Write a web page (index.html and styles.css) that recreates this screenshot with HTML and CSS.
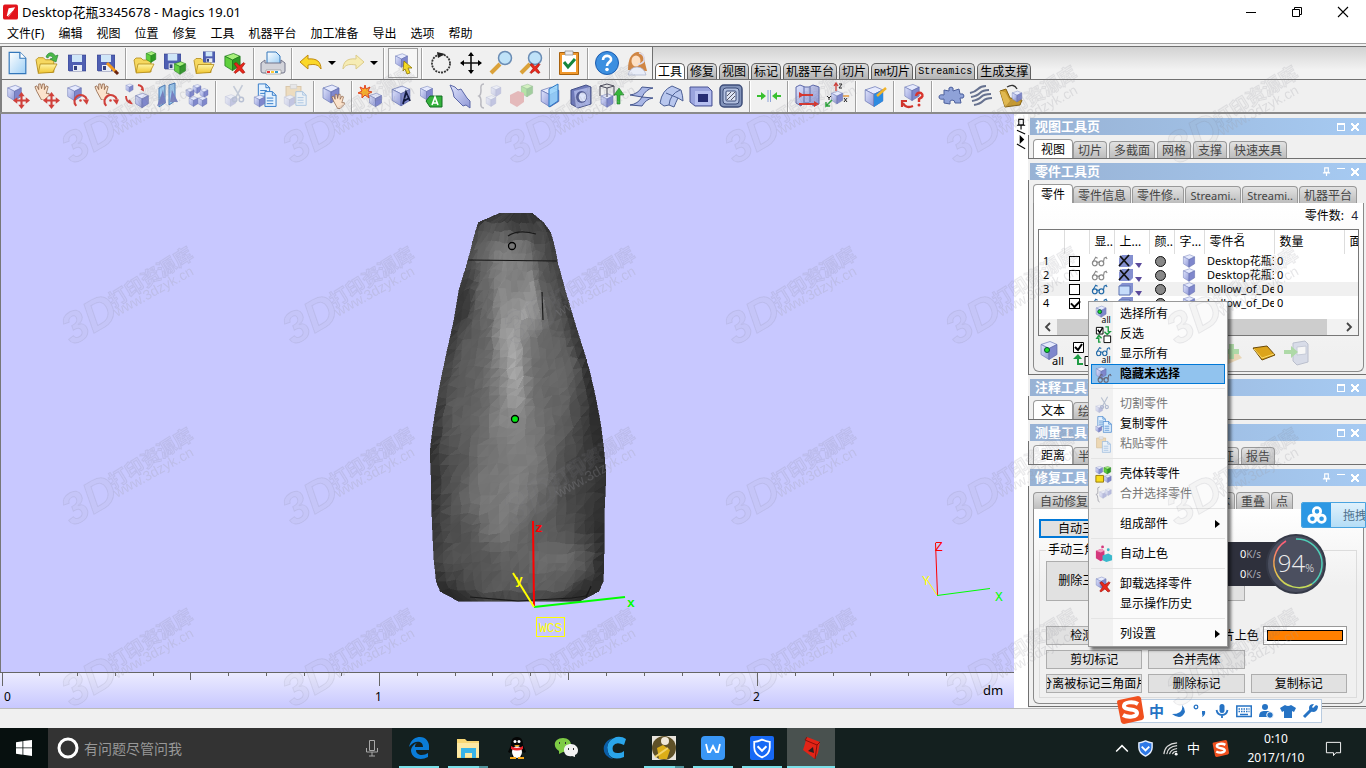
FILE: index.html
```html
<!DOCTYPE html>
<html lang="zh-CN">
<head>
<meta charset="utf-8">
<title>Desktop花瓶3345678 - Magics 19.01</title>
<link rel="stylesheet" href="styles.css">
</head>
<body>
<svg class="defs" aria-hidden="true">
  <defs>
    <linearGradient id="gFace" x1="0" y1="0" x2="1" y2="1"><stop offset="0" stop-color="#dfe4fc"/><stop offset="1" stop-color="#8f97d6"/></linearGradient>
    <linearGradient id="gFolder" x1="0" y1="0" x2="0" y2="1"><stop offset="0" stop-color="#fff6a8"/><stop offset="1" stop-color="#f0c42c"/></linearGradient>
    <linearGradient id="gPage" x1="0" y1="0" x2="1" y2="1"><stop offset="0" stop-color="#fff"/><stop offset="1" stop-color="#9fd0f6"/></linearGradient>
    <linearGradient id="gRing" x1="0" y1="0" x2="0" y2="1"><stop offset="0" stop-color="#ff5a7a"/><stop offset=".6" stop-color="#f2b84a"/><stop offset="1" stop-color="#c4dc5a"/></linearGradient>
  </defs>
  <symbol id="cube" viewBox="0 0 20 20"><path d="M2 4 11 1l7 3-8 4z" fill="#e6eafd" stroke="#6f7cb8" stroke-width=".7"/><path d="M2 4l8 4v11l-8-5z" fill="url(#gFace)" stroke="#6f7cb8" stroke-width=".7"/><path d="M10 8l8-4v10l-8 5z" fill="#7f87cc" stroke="#5d68a8" stroke-width=".7"/></symbol>
  <symbol id="gcube" viewBox="0 0 20 20"><path d="M2 4 11 1l7 3-8 4z" fill="#a8f07c" stroke="#1f7a1c" stroke-width=".8"/><path d="M2 4l8 4v11l-8-5z" fill="#5fd03c" stroke="#1f7a1c" stroke-width=".8"/><path d="M10 8l8-4v10l-8 5z" fill="#2d9a24" stroke="#1f7a1c" stroke-width=".8"/></symbol>
  <symbol id="folder" viewBox="0 0 22 18"><path d="M1 4l2-2h5l2 2h8v12H3z" fill="#f6d860" stroke="#b18a18" stroke-width=".8"/><path d="M5 8h16l-4 8-14 1z" fill="url(#gFolder)" stroke="#b18a18" stroke-width=".8"/></symbol>
  <symbol id="floppy" viewBox="0 0 18 18"><path d="M0 1h18v16H1l-1-1z" fill="#4f5fb2" stroke="#2f3c86" stroke-width=".6"/><path d="M4 1h10v7H4z" fill="#cfe6f8"/><path d="M5 11h9v6H5z" fill="#e9edf5"/><path d="M6 12h3v4H6z" fill="#33407e"/></symbol>
  <symbol id="page" viewBox="0 0 16 20"><path d="M1 1h9l5 5v13H1z" fill="url(#gPage)" stroke="#3377bb"/><path d="M10 1v5h5" fill="#fff" stroke="#3377bb"/></symbol>
  <symbol id="lines" viewBox="0 0 14 18"><path d="M1 1h8l4 4v12H1z" fill="#e5f2fe" stroke="#2f78c8"/><path d="M9 1v4h4M3 8h7M3 11h7M3 14h7" fill="none" stroke="#2f78c8"/></symbol>
  <symbol id="redx" viewBox="0 0 12 12"><path d="M1 2l2-1 3 3 4-3 1 1-3 4 3 4-2 1-3-3-4 3-1-1 3-4z" fill="#e8281c" stroke="#a01008" stroke-width=".6"/></symbol>
  <symbol id="move" viewBox="0 0 16 16"><path d="M8 0l3 4H9v3h3V5l4 3-4 3V9H9v3h2l-3 4-3-4h2V9H4v2L0 8l4-3v2h3V4H5z" fill="#d0403a"/></symbol>
  <symbol id="rot" viewBox="0 0 16 16"><path d="M4 14A6 6 0 1 1 14 8" fill="none" stroke="#d0403a" stroke-width="2"/><path d="M10 8h6l-2 5z" fill="#d0403a"/><circle cx="8" cy="9" r="1.2" fill="#d0403a"/></symbol>
  <symbol id="hand" viewBox="0 0 18 18"><path d="M3 9L1 4l2-1 2 4L5 1l2 0 1 5 1-5 2 0 0 6 2-4 2 1-2 7 3 0v2l-5 5H8z" fill="#fbe3cc" stroke="#8a5a3c" stroke-width=".8"/></symbol>
  <symbol id="scissors" viewBox="0 0 14 18"><path d="M11 1L5 12M3 2l6 10" stroke="#7e90b0" stroke-width="1.4" fill="none"/><circle cx="4" cy="14" r="2" fill="none" stroke="#6679a8" stroke-width="1.3"/><circle cx="10" cy="14" r="2" fill="none" stroke="#6679a8" stroke-width="1.3"/></symbol>
  <symbol id="clip" viewBox="0 0 16 18"><path d="M1 2h14v15H1z" fill="#eac078" stroke="#b98a42"/><path d="M5 0h6v4H5z" fill="#d8d8de" stroke="#999" stroke-width=".6"/></symbol>
  <symbol id="glasses" viewBox="0 0 18 12"><path d="M2 7L5 2l2 1M13 8l1-5 2-1 1 2M6 8q1-2 3 0" fill="none" stroke="currentColor" stroke-width="1.200"/><ellipse cx="4" cy="8.500" rx="2.500" ry="2.700" fill="none" stroke="currentColor" stroke-width="1.300"/><ellipse cx="11" cy="8.500" rx="2.500" ry="2.700" fill="none" stroke="currentColor" stroke-width="1.300"/></symbol>
  <symbol id="s-logo" viewBox="0 0 28 28"><path d="M1 6q0-2 2-2L22 0q2 0 3 2l3 19q0 2-2 3L8 28q-2 0-3-2z" fill="#f0501e"/><path d="M22 8C17 5 8 6 8 10c0 5 13 2 13 7 0 4-9 5-14 2" fill="none" stroke="#fff" stroke-width="4"/></symbol>
  <symbol id="shield" viewBox="0 0 18 18"><path d="M9 1q4 2 7 2v5q0 6-7 9Q2 14 2 8V3q3 0 7-2z" fill="none" stroke="currentColor" stroke-width="1.600"/><path d="M5 7l4 4 4-4" fill="none" stroke="currentColor" stroke-width="1.800"/></symbol>
  <symbol id="pin" viewBox="0 0 10 10"><path d="M3 1h4v5H3zM1 6.500h8M5 7v3" fill="none" stroke="currentColor" stroke-width="1.300"/></symbol>
</svg>

<header class="titlebar">
  <svg class="app-icon" viewBox="0 0 16 16"><rect width="16" height="16" rx="2" fill="#e2141c"/><path d="M4 12l2-8 7-1-3 5-4 5z" fill="#fff"/><path d="M5 13l6-6" stroke="#e2141c"/></svg>
  <span class="title">Desktop花瓶3345678 - Magics 19.01</span>
  <div class="win-btns">
    <button aria-label="最小化"><svg viewBox="0 0 12 12"><path d="M1 6.500h10" stroke="#000"/></svg></button>
    <button aria-label="还原"><svg viewBox="0 0 12 12"><path d="M1.500 3.500h7v7h-7zM3.500 3.500v-2h7v7h-2" fill="none" stroke="#000"/></svg></button>
    <button aria-label="关闭"><svg viewBox="0 0 12 12"><path d="M1 1l10 10M11 1L1 11" stroke="#000" stroke-width="1.100"/></svg></button>
  </div>
</header>
<nav class="menubar">
  <button>文件(F)</button><button>编辑</button><button>视图</button><button>位置</button><button>修复</button><button>工具</button><button>机器平台</button><button>加工准备</button><button>导出</button><button>选项</button><button>帮助</button>
</nav>

<div class="toolbars">
  <div class="tool-row first">
    <div class="tools">
      <button class="tb" aria-label="新建"><svg viewBox="0 0 28 28"><use href="#page" x="5" y="2" width="19" height="24"/></svg></button>
      <button class="tb" aria-label="打开"><svg viewBox="0 0 28 28"><use href="#folder" x="2" y="6" width="23" height="20"/><path d="M13 8c2-6 8-5 9-1l3-1-2 7-6-3 3-1c-1-2-4-3-5 0z" fill="#4ab848" stroke="#1f7a30" stroke-width=".6"/></svg></button>
      <button class="tb" aria-label="保存"><svg viewBox="0 0 28 28"><use href="#floppy" x="5" y="5" width="18" height="18"/></svg></button>
      <button class="tb" aria-label="另存为"><svg viewBox="0 0 28 28"><use href="#floppy" x="4" y="5" width="18" height="18"/><path d="M14 14l9 9" stroke="#f29a1c" stroke-width="3"/><path d="M22 22l3 3" stroke="#6a2410" stroke-width="3"/></svg></button>
      <i class="sep"></i>
      <button class="tb" aria-label="导入零件"><svg viewBox="0 0 28 28"><use href="#folder" x="2" y="6" width="22" height="20"/><use href="#gcube" x="14" y="2" width="12" height="12"/></svg></button>
      <button class="tb" aria-label="保存零件"><svg viewBox="0 0 28 28"><use href="#floppy" x="3" y="4" width="17" height="17"/><use href="#gcube" x="12" y="12" width="14" height="14"/></svg></button>
      <button class="tb" aria-label="零件另存为"><svg viewBox="0 0 28 28"><use href="#folder" x="2" y="7" width="22" height="19"/><use href="#floppy" x="12" y="2" width="12" height="12"/></svg></button>
      <button class="tb" aria-label="卸载零件"><svg viewBox="0 0 28 28"><use href="#gcube" x="2" y="3" width="19" height="20"/><use href="#redx" x="12" y="12" width="13" height="14"/></svg></button>
      <i class="sep"></i>
      <button class="tb" aria-label="打印"><svg viewBox="0 0 28 28"><path d="M8 14V3h9l4 4v7" fill="url(#gPage)" stroke="#3377bb"/><path d="M2 14l4-3v3h16v-3l4 3v8q0 2-2 2H4q-2 0-2-2z" fill="#d2d3da" stroke="#73758a"/><path d="M7 21h15v4H7z" fill="#fff" stroke="#888" stroke-width=".6"/><path d="M8 22h3v2H8z" fill="#e33"/><path d="M12 22h3v2h-3z" fill="#fc3"/><path d="M16 22h3v2h-3z" fill="#39c"/></svg></button>
      <i class="sep"></i>
      <button class="tb" aria-label="撤销"><svg viewBox="0 0 28 28"><path d="M3 13l8-7v4c9-1 13 3 13 10-3-5-7-5-13-4v4z" fill="#fbd828" stroke="#c08a10"/></svg></button>
      <button class="drop" aria-label="撤销列表"></button>
      <button class="tb" aria-label="重做"><svg viewBox="0 0 28 28"><path d="M25 13l-8-7v4C8 9 4 13 4 20c3-5 7-5 13-4v4z" fill="#f6ecb4" stroke="#dccb8a"/></svg></button>
      <button class="drop" aria-label="重做列表"></button>
      <i class="sep"></i>
      <button class="tb pressed" aria-label="选择零件"><svg viewBox="0 0 28 28"><use href="#cube" x="5" y="3" width="15" height="17"/><path d="M15 12l8 7-4 0 2 5-3 1-2-5-2 2z" fill="#ffe21c" stroke="#8a7400" stroke-width=".8"/></svg></button>
      <i class="sep"></i>
      <button class="tb" aria-label="旋转"><svg viewBox="0 0 28 28"><circle cx="14" cy="14.500" r="9" fill="none" stroke="#333" stroke-width="1.800" stroke-dasharray="2 1"/><path d="M10 3l8 2-7 4z" fill="#222"/></svg></button>
      <button class="tb" aria-label="平移"><svg viewBox="0 0 28 28"><path d="M14 4v20M4 14h20" stroke="#111" stroke-width="1.600"/><path d="M14 3l3 4h-6zM14 25l3-4h-6zM3 14l4-3v6zM25 14l-4-3v6z"/></svg></button>
      <button class="tb" aria-label="缩放"><svg viewBox="0 0 28 28"><path d="M4 24l9-9" stroke="#dba23a" stroke-width="4"/><circle cx="18" cy="9" r="6.500" fill="#bfe2f8" stroke="#6a8cb4" stroke-width="1.500"/></svg></button>
      <button class="tb" aria-label="取消缩放"><svg viewBox="0 0 28 28"><path d="M4 24l9-9" stroke="#dba23a" stroke-width="4"/><circle cx="18" cy="9" r="6.500" fill="#bfe2f8" stroke="#6a8cb4" stroke-width="1.500"/><use href="#redx" x="12" y="13" width="12" height="13"/></svg></button>
      <i class="sep"></i>
      <button class="tb" aria-label="检查"><svg viewBox="0 0 28 28"><path d="M4.500 3.500h19v22h-19z" fill="#f0982c" stroke="#a8620e"/><path d="M7 6h14v17H7z" fill="#fff"/><path d="M10 2h8v4h-8z" fill="#e9e9ee" stroke="#888" stroke-width=".7"/><path d="M9 13l4 5 7-8" fill="none" stroke="#16863c" stroke-width="3"/></svg></button>
      <i class="sep"></i>
      <button class="tb" aria-label="帮助"><svg viewBox="0 0 28 28"><circle cx="14" cy="14" r="11.500" fill="#3c8fe0" stroke="#1c5cae"/><path d="M10 11c0-6 9-5 8 0-1 3-4 2-4 6" fill="none" stroke="#fff" stroke-width="2.600"/><circle cx="14" cy="20.500" r="1.800" fill="#fff"/></svg></button>
      <button class="tb" aria-label="在线支持"><svg viewBox="0 0 28 28"><path d="M5 21q0-16 9-18 8-1 8 11l2 8z" fill="#d08644"/><ellipse cx="13" cy="12" rx="4.500" ry="5.500" fill="#fde0c4"/><path d="M5 26q2-8 9-8t9 8z" fill="#e9edf8" stroke="#aab2cc" stroke-width=".7"/><path d="M16 4q6 1 5 8-2 3-6 3" fill="none" stroke="#dde" stroke-width="1.500"/></svg></button>
    </div>
    <div class="page-tabs">
      <button class="on">工具</button><button>修复</button><button>视图</button><button>标记</button><button>机器平台</button><button>切片</button><button><span class="mono">RM</span>切片</button><button class="mono">Streamics</button><button>生成支撑</button>
    </div>
  </div>
  <div class="tool-row">
    <div class="tools">
      <button class="tb" aria-label="移动零件"><svg viewBox="0 0 28 28"><use href="#cube" x="3" y="2" width="17" height="18"/><use href="#move" x="10" y="10" width="17" height="17"/></svg></button>
      <button class="tb" aria-label="手动移动"><svg viewBox="0 0 28 28"><use href="#hand" x="1" y="1" width="17" height="17"/><use href="#move" x="10" y="10" width="17" height="17"/></svg></button>
      <button class="tb" aria-label="旋转零件"><svg viewBox="0 0 28 28"><use href="#cube" x="3" y="2" width="17" height="18"/><use href="#rot" x="9" y="9" width="17" height="17"/></svg></button>
      <button class="tb" aria-label="手动旋转"><svg viewBox="0 0 28 28"><use href="#hand" x="1" y="1" width="17" height="17"/><use href="#rot" x="9" y="9" width="17" height="17"/></svg></button>
      <button class="tb" aria-label="缩放零件"><svg viewBox="0 0 28 28"><use href="#cube" x="2" y="1" width="9" height="10"/><use href="#cube" x="11" y="10" width="16" height="17"/><path d="M15 3q5 1 5 5l-2-1M3 14q0 6 5 7l-2-3" fill="none" stroke="#d0403a" stroke-width="1.800"/></svg></button>
      <button class="tb" aria-label="镜像"><svg viewBox="0 0 28 28"><path d="M6 6l6-3v18l-6 4zM16 3l6-2v18l-6 4z" fill="#9bc8ee" stroke="#4478b8"/><path d="M4 24l6-16 3 13zM17 20l2-12 6 12z" fill="#7680c0"/></svg></button>
      <button class="tb" aria-label="自动摆放"><svg viewBox="0 0 28 28"><use href="#cube" x="9" y="2" width="10" height="10"/><use href="#cube" x="2" y="6" width="10" height="10"/><use href="#cube" x="16" y="6" width="10" height="10"/><use href="#cube" x="5" y="14" width="11" height="11"/><use href="#cube" x="14" y="14" width="11" height="11"/></svg></button>
      <i class="sep"></i>
      <button class="tb dim" aria-label="切割零件"><svg viewBox="0 0 28 28"><use href="#cube" x="3" y="12" width="13" height="13"/><use href="#scissors" x="9" y="2" width="16" height="20"/></svg></button>
      <button class="tb" aria-label="复制零件"><svg viewBox="0 0 28 28"><use href="#lines" x="6" y="1" width="14" height="17"/><use href="#lines" x="13" y="8" width="13" height="18"/><use href="#cube" x="2" y="12" width="13" height="14"/></svg></button>
      <button class="tb dim" aria-label="粘贴零件"><svg viewBox="0 0 28 28"><use href="#clip" x="4" y="2" width="17" height="20"/><use href="#lines" x="14" y="8" width="12" height="17"/><use href="#cube" x="2" y="12" width="13" height="14"/></svg></button>
      <i class="sep"></i>
      <button class="tb" aria-label="拾取"><svg viewBox="0 0 28 28"><use href="#cube" x="2" y="2" width="20" height="20"/><use href="#hand" x="12" y="11" width="15" height="16"/></svg></button>
      <i class="sep"></i>
      <button class="tb" aria-label="创建"><svg viewBox="0 0 28 28"><use href="#cube" x="11" y="10" width="15" height="16"/><path d="M8 3l1 4 4-2-2 4 4 1-4 2 1 4-4-3-3 3 0-4-4-1 4-2-2-4 4 2z" fill="#ffb224" stroke="#e3401c"/></svg></button>
      <button class="tb" aria-label="文字"><svg viewBox="0 0 28 28"><use href="#cube" x="3" y="2" width="22" height="24"/><path d="M16 22l3-12 4 9M17 19l5-3" fill="none" stroke="#10183c" stroke-width="1.800"/></svg></button>
      <button class="tb" aria-label="标签"><svg viewBox="0 0 28 28"><use href="#cube" x="2" y="3" width="15" height="16"/><path d="M9 19l4-5h12v11H13z" fill="#35b23c" stroke="#136e22"/><path d="M15 23l3-8 3 8M16 21h4" fill="none" stroke="#fff" stroke-width="1.600"/></svg></button>
      <button class="tb" aria-label="拉伸"><svg viewBox="0 0 28 28"><path d="M3 3l5 2 3 3 3-1 6 9 3 3v7l-4-3-3 1-9-9-1-5z" fill="url(#gFace)" stroke="#5c68a8"/></svg></button>
      <button class="tb dim" aria-label="合并"><svg viewBox="0 0 28 28"><path d="M7 2q-4 0-3 6 0 5-2 6 2 1 2 6-1 6 3 6" fill="none" stroke="#667" stroke-width="1.500"/><use href="#cube" x="13" y="3" width="12" height="12"/><use href="#cube" x="8" y="13" width="12" height="12"/></svg></button>
      <button class="tb dim" aria-label="布尔"><svg viewBox="0 0 28 28"><use href="#gcube" x="13" y="1" width="14" height="15"/><path d="M3 13l8-4 6 2v9l-7 5-7-4z" fill="#d4686c"/></svg></button>
      <button class="tb" aria-label="切割"><svg viewBox="0 0 28 28"><use href="#cube" x="2" y="4" width="22" height="22"/><path d="M12 7l9-5v17l-9 6z" fill="#94d2fa" fill-opacity=".85" stroke="#2a78c4"/></svg></button>
      <button class="tb" aria-label="打孔"><svg viewBox="0 0 28 28"><path d="M4 8l15-5 5 2v17l-13 4-7-4z" fill="#6d78b8" stroke="#445088"/><path d="M7 9l16-4v17l-14 4z" fill="#a6b0e2"/><ellipse cx="14.500" cy="15" rx="5.500" ry="6" fill="#525c96"/><ellipse cx="15.500" cy="15" rx="3.800" ry="4.500" fill="#dfe6fc"/></svg></button>
      <button class="tb" aria-label="拉升"><svg viewBox="0 0 28 28"><use href="#cube" x="2" y="11" width="16" height="15"/><path d="M3 14V4l7-2 7 2v10M10 6v9M3 4l7 2 7-2" fill="none" stroke="#445"/><path d="M20 22v-9h-3l5-7 5 7h-4v9z" fill="#37b63a" stroke="#1c7a28" stroke-width=".6"/></svg></button>
      <button class="tb" aria-label="偏移"><svg viewBox="0 0 28 28"><path d="M3 13q8-1 12-8l11 1q-7 1-11 9zM3 23q8-1 12-8l11 1q-7 1-11 8z" fill="#aab7e6" stroke="#46578f"/></svg></button>
      <button class="tb" aria-label="曲面"><svg viewBox="0 0 28 28"><path d="M3 21q2-13 12-17l9 4q2 6 2 11l-5-3q-2 4-4 9l-5-2-5 1z" fill="#b9c7ee" stroke="#4c5f95"/><path d="M12 23q1-11 11-15M9 11l12 5" fill="none" stroke="#4c5f95"/></svg></button>
      <button class="tb" aria-label="抽壳"><svg viewBox="0 0 28 28"><path d="M3 5h18l4 4v15H8l-5-4z" fill="#9aa4de" stroke="#4b5594"/><path d="M8 9h16v14H8z" fill="#b6bff0"/><path d="M11 12h10v8H11z" fill="#252c74"/></svg></button>
      <button class="tb" aria-label="填充"><svg viewBox="0 0 28 28"><rect x="3" y="3" width="22" height="22" rx="4" fill="#8293ba" stroke="#3c4c78" stroke-width="1.500"/><rect x="6" y="6" width="16" height="16" rx="3" fill="#b2c0e0" stroke="#3c4c78"/><rect x="9" y="9" width="10" height="10" rx="1" fill="#dde4f4" stroke="#3c4c78"/><path d="M10 14l4-4M10 18l8-8M14 18l4-4" stroke="#556"/></svg></button>
      <i class="sep"></i>
      <button class="tb" aria-label="间距"><svg viewBox="0 0 28 28"><path d="M2 13h4v-3l5 4-5 4v-3H2zM26 13h-4v-3l-5 4 5 4v-3h4z" fill="#38c030"/><path d="M13 8v12M15.500 8v12" stroke="#8fa4d8"/></svg></button>
      <i class="sep"></i>
      <button class="tb" aria-label="测量"><svg viewBox="0 0 28 28"><path d="M3 5l4-2 5 2 4 0 4-2 6 2v17l-5 2-5-3-6 0-2 3-5-3z" fill="url(#gFace)" stroke="#5d68a8"/><path d="M11 5v15M17 5v15" stroke="#5d68a8"/><path d="M6 13h14M6 22h16" stroke="#d8342c" stroke-width="2"/><path d="M11 13l-5-3v6zM26 22l-5-3v6z" fill="#d8342c"/></svg></button>
      <button class="tb" aria-label="坐标"><svg viewBox="0 0 28 28"><use href="#cube" x="7" y="8" width="14" height="15"/><path d="M13 9V2M11 4l2-3 2 3" fill="none" stroke="#d8342c" stroke-width="1.300"/><path d="M20 14h6" stroke="#e89a3a" stroke-width="1.500"/><path d="M9 18l-6 6v-4M3 24h4" fill="none" stroke="#29a238" stroke-width="1.500"/><path d="M16 2h3l-3 4h3M21 16l3 4M24 16l-3 4M4 14l2 2 2-2M6 16v2" stroke="#222" fill="none"/></svg></button>
      <i class="sep"></i>
      <button class="tb" aria-label="修复零件"><svg viewBox="0 0 28 28"><use href="#cube" x="2" y="3" width="22" height="23"/><path d="M13 12l9-4v11l-9 6z" fill="#2d8be0"/><path d="M16 14l9-8" stroke="#f2b428" stroke-width="2.500"/></svg></button>
      <i class="sep"></i>
      <button class="tb" aria-label="诊断"><svg viewBox="0 0 28 28"><use href="#cube" x="4" y="1" width="18" height="19"/><path d="M14 24q-7 3-10-3M3 25v-6h5" fill="none" stroke="#d0342c" stroke-width="2.200"/><path d="M17 14q1-4 5-3 4 3-2 6v3" fill="none" stroke="#d8342c" stroke-width="2.400"/><circle cx="20" cy="23" r="1.500" fill="#d8342c"/></svg></button>
      <i class="sep"></i>
      <button class="tb" aria-label="装配"><svg viewBox="0 0 28 28"><path d="M7 8l5 1q-1-4 2-4t2 4l6-2 1 5q4-1 4 2t-4 2l1 5-6 0q0-3-3-3t-2 4l-6-1v-4q-5 1-5-2t5-2z" fill="#8fa2d8" stroke="#4d609c"/></svg></button>
      <button class="tb" aria-label="纹理"><svg viewBox="0 0 28 28"><path d="M3 11q5-1 8-4t8-3M4 15q6-1 9-4t9-3M5 19q6-1 9-4t10-3M7 23q6-1 9-4t9-3" fill="none" stroke="#66718f" stroke-width="2"/></svg></button>
      <button class="tb" aria-label="翻转"><svg viewBox="0 0 28 28"><path d="M3 9l6-2 4 9 12 2-2 5-15 2z" fill="#c89a2c" stroke="#87620e"/><path d="M3 9l5 1 5 9-5 6z" fill="#e0b850"/><use href="#cube" x="14" y="8" width="12" height="13"/><path d="M10 5q7-4 10 2" fill="none" stroke="#333" stroke-width="1.300"/></svg></button>
    </div>
  </div>
</div>

<main class="workspace">
  <section class="view">
    <svg class="scene" viewBox="0 115 1014 556">
      <g id="mesh" shape-rendering="crispEdges"></g>
      <path d="M468 260l89 1" stroke="#161616"/>
      <path d="M508 236q10-7 28-2M542 292l1 28M470 597l48 4 54-3 14-2 5-9M586 598l5-12" fill="none" stroke="#1a1a1a" stroke-width="1.200"/>
      <circle cx="512" cy="246" r="3.500" fill="#777" stroke="#000" stroke-width="1.300"/>
      <circle cx="515" cy="419" r="3.500" fill="#00ea10" stroke="#000" stroke-width="1.300"/>
      <path d="M533 521l1 86" stroke="#f00" stroke-width="2"/>
      <path d="M534 607l91-10" stroke="#0f0" stroke-width="2"/>
      <path d="M534 607l-21-34" stroke="#ff0" stroke-width="2"/>
      <text class="axis bold" x="535" y="532" fill="#f00">z</text>
      <text class="axis bold" x="515" y="584" fill="#ff0">y</text>
      <text class="axis bold" x="627" y="607" fill="#0f0">x</text>
      <rect x="536.500" y="617.500" width="28" height="19" fill="none" stroke="#ff0"/>
      <text class="axis" x="539" y="632" fill="#ff0">WCS</text>
      <path d="M935.500 543l2 52" stroke="#f00"/><path d="M937 595.500l53-7" stroke="#0f0"/><path d="M937 595l-10-15" stroke="#ff0"/>
      <text class="axis" x="935" y="551" fill="#f00">Z</text><text class="axis" x="922" y="585" fill="#ff0">Y</text><text class="axis" x="995" y="601" fill="#0f0">X</text>
    </svg>
    <svg class="ruler" viewBox="0 0 1014 36" preserveAspectRatio="xMinYMin slice">
      <path d="M0 .5h1014M2.500 0v14M379.500 0v14M757.500 0v14" stroke="#666"/>
      <path d="M190.500 0v8M568.500 0v8M946.500 0v4" stroke="#666"/>
      <path d="M39.500 0v4M77.500 0v4M115.500 0v4M153.500 0v4M228.500 0v4M266.500 0v4M304.500 0v4M341.500 0v4M417.500 0v4M455.500 0v4M492.500 0v4M530.500 0v4M606.500 0v4M644.500 0v4M682.500 0v4M719.500 0v4M795.500 0v4M833.500 0v4M870.500 0v4M908.500 0v4" stroke="#666"/>
      <text x="4" y="29">0</text><text x="375" y="29">1</text><text x="753" y="29">2</text><text class="unit" x="983" y="23">dm</text>
    </svg>
  </section>

  <aside class="dock">
    <div class="dock-grip">
      <svg viewBox="0 0 12 36"><path d="M3 2h5v6H3zM1 8.500h9M5.500 9v4M1 14l9 4M1 29l9 5" fill="none" stroke="#000" stroke-width="1.200"/><path d="M4 19l5 5-5 5z"/></svg>
    </div>
    <div class="panels">
      <section class="panel">
        <h2>视图工具页<span class="ctl"><i class="max"></i><i class="x"></i></span></h2>
        <div class="body"><div class="tabs wide"><button class="on">视图</button><button>切片</button><button>多截面</button><button>网格</button><button>支撑</button><button>快速夹具</button></div></div>
      </section>
      <section class="panel">
        <h2>零件工具页<span class="ctl"><svg viewBox="0 0 10 10"><use href="#pin"/></svg><i class="min"></i><i class="x"></i></span></h2>
        <div class="body">
          <div class="tabs"><button class="on">零件</button><button>零件信息</button><button>零件修..</button><button class="sm">Streami..</button><button class="sm">Streami..</button><button>机器平台</button></div>
          <div class="page">
            <p class="count">零件数: <span>4</span></p>
            <div class="grid">
              <table>
                <colgroup><col class="c25"><col class="c25"><col class="c25"><col class="c35"><col class="c25"><col class="c30"><col class="c70"><col class="c70"><col></colgroup>
                <thead><tr><th></th><th></th><th>显..</th><th>上...</th><th>颜..</th><th>字...</th><th class="sort">零件名</th><th>数量</th><th>面</th></tr></thead>
                <tbody>
                  <tr><td>1</td><td><input type="checkbox" aria-label="零件 1"></td><td class="g"><svg viewBox="0 0 18 12"><use href="#glasses"/></svg></td><td><svg class="sh" viewBox="0 0 24 14"><path d="M1 4l3-3h11v9l-3 3H1z" fill="#8490d0"/><path d="M2 2l9 10M11 1L1 12" stroke="#111" stroke-width="1.800"/><path d="M17 9h7l-3 5z" fill="#5a4a9c"/></svg></td><td><i class="dot"></i></td><td><svg class="cb" viewBox="0 0 20 20"><use href="#cube"/></svg></td><td>Desktop花瓶3</td><td>0</td><td></td></tr>
                  <tr><td>2</td><td><input type="checkbox" aria-label="零件 2"></td><td class="g"><svg viewBox="0 0 18 12"><use href="#glasses"/></svg></td><td><svg class="sh" viewBox="0 0 24 14"><path d="M1 4l3-3h11v9l-3 3H1z" fill="#8490d0"/><path d="M2 2l9 10M11 1L1 12" stroke="#111" stroke-width="1.800"/><path d="M17 9h7l-3 5z" fill="#5a4a9c"/></svg></td><td><i class="dot"></i></td><td><svg class="cb" viewBox="0 0 20 20"><use href="#cube"/></svg></td><td>Desktop花瓶3</td><td>0</td><td></td></tr>
                  <tr class="alt"><td>3</td><td><input type="checkbox" aria-label="零件 3"></td><td class="g b"><svg viewBox="0 0 18 12"><use href="#glasses"/></svg></td><td><svg class="sh" viewBox="0 0 24 14"><path d="M1 4l3-3h11v9l-3 3H1z" fill="#8490d0"/><path d="M1 4h11v9H1z" fill="#c6dcfa" stroke="#5a70b0"/><path d="M17 9h7l-3 5z" fill="#5a4a9c"/></svg></td><td><i class="dot"></i></td><td><svg class="cb" viewBox="0 0 20 20"><use href="#cube"/></svg></td><td>hollow_of_Des</td><td>0</td><td></td></tr>
                  <tr><td>4</td><td><input type="checkbox" checked aria-label="零件 4"></td><td class="g b"><svg viewBox="0 0 18 12"><use href="#glasses"/></svg></td><td><svg class="sh" viewBox="0 0 24 14"><path d="M1 4l3-3h11v9l-3 3H1z" fill="#8490d0"/><path d="M1 4h11v9H1z" fill="#c6dcfa" stroke="#5a70b0"/></svg></td><td><i class="dot"></i></td><td><svg class="cb" viewBox="0 0 20 20"><use href="#cube"/></svg></td><td>hollow_of_Des</td><td>0</td><td></td></tr>
                </tbody>
              </table>
              <div class="hscroll"><button aria-label="向左"><svg viewBox="0 0 8 10"><path d="M6 1L2 5l4 4" fill="none" stroke="#444" stroke-width="1.800"/></svg></button><span></span><button aria-label="向右"><svg viewBox="0 0 8 10"><path d="M2 1l4 4-4 4" fill="none" stroke="#444" stroke-width="1.800"/></svg></button></div>
            </div>
            <div class="part-tools">
              <button aria-label="选择所有"><svg viewBox="0 0 26 26"><use href="#cube" width="20" height="21"/><circle cx="8" cy="10" r="2.500" fill="#1de02a" stroke="#053"/><text x="13" y="25">all</text></svg></button>
              <button aria-label="反选"><svg viewBox="0 0 26 26"><path d="M2.500 2.500h10v10h-10zM14 16.500h9v9h-9z" fill="#fff" stroke="#000"/><path d="M4 7l3 3 4-6" fill="none" stroke="#000" stroke-width="2"/><path d="M7 14l4 5H8v4h4v2H6v-6H2z" fill="#1f9c44"/></svg></button>
              <span class="grow"></span>
              <button class="dim" aria-label="添加"><svg viewBox="0 0 26 26"><path d="M1 14l14-5 8 9-14 6z" fill="#e0b060"/><path d="M10 4h5v5h5v5h-5v5h-5v-5H5V9h5z" fill="#4eb83c"/></svg></button>
              <button aria-label="平台"><svg viewBox="0 0 26 26"><path d="M2 8l14-2 8 9-13 5z" fill="#dca41c" stroke="#6c4a08"/><path d="M3 9l8 9 12-4" stroke="#f8da6c" fill="none"/></svg></button>
              <button class="dim" aria-label="发送到机器"><svg viewBox="0 0 26 26"><path d="M10 3l12-2 3 3v18l-11 3-4-4z" fill="#b4bedc" stroke="#6c789a"/><path d="M14 7l9-1v8l-9 1z" fill="#fff" stroke="#8895b5"/><path d="M1 10h7V6l7 6-7 6v-4H1z" fill="#4eb83c"/></svg></button>
            </div>
          </div>
        </div>
      </section>
      <section class="panel">
        <h2>注释工具页<span class="ctl"><i class="max"></i><i class="x"></i></span></h2>
        <div class="body"><div class="tabs"><button class="on">文本</button><button>绘图</button></div></div>
      </section>
      <section class="panel">
        <h2>测量工具页<span class="ctl"><i class="max"></i><i class="x"></i></span></h2>
        <div class="body"><div class="tabs wide"><button class="on">距离</button><button>半径</button><button>角度</button><button>壁厚分析</button><button>特征</button><button>报告</button></div></div>
      </section>
      <section class="panel last">
        <h2>修复工具页<span class="ctl"><svg viewBox="0 0 10 10"><use href="#pin"/></svg><i class="min"></i><i class="x"></i></span></h2>
        <div class="body">
          <div class="tabs"><button>自动修复</button><button>基本</button><button>空洞</button><button>三角</button><button>壳体</button><button>重叠</button><button>点</button></div>
          <div class="page repair">
            <button class="btn focus">自动三角面片</button>
            <fieldset>
              <legend>手动三角面片</legend>
              <div class="btns">
                <button class="btn tall">删除三角面片</button><button class="btn tall">标记三角面片</button><span></span>
                <button class="btn low">检测标记</button><span class="lbl">面片上色</span><button class="color" aria-label="面片上色"><i></i></button>
                <button class="btn">剪切标记</button><button class="btn">合并壳体</button><span></span>
                <button class="btn clip"><span>分离被标记三角面片</span></button><button class="btn">删除标记</button><button class="btn">复制标记</button>
              </div>
            </fieldset>
          </div>
        </div>
      </section>
    </div>
  </aside>

  <div class="net">
    <div class="rates"><span><b>0</b>K/s</span><span><b>0</b>K/s</span></div>
    <div class="gauge"><svg viewBox="0 0 60 60"><circle cx="30" cy="30" r="29" fill="#4b4f5f" stroke="#363a48" stroke-width="2"/><path d="M20 7a25 25 0 1 0 26 43" fill="none" stroke="url(#gRing)" stroke-width="1.500"/><path d="M30 5a25 25 0 0 1 16 45" fill="none" stroke="#4fd0b8" stroke-width="1.500"/></svg><p>94<small>%</small></p></div>
  </div>
  <div class="cloud"><span class="mark"><svg viewBox="0 0 24 24"><g fill="none" stroke="#fff" stroke-width="3"><circle cx="12" cy="8" r="4"/><circle cx="7" cy="16" r="4"/><circle cx="17" cy="16" r="4"/></g></svg></span><span class="txt">拖拽上传</span></div>

  <div class="context" role="menu">
    <button role="menuitem"><svg viewBox="0 0 20 20"><use href="#cube" x="1" y="0" width="13" height="14"/><circle cx="6" cy="7" r="2" fill="#1de02a" stroke="#053"/><text x="8" y="19">all</text></svg>选择所有</button>
    <button role="menuitem"><svg viewBox="0 0 20 20"><path d="M2.500 2.500h7v7h-7zM10.500 11.500h7v7h-7z" fill="#fff" stroke="#000"/><path d="M4 5l2 3 3-5" fill="none" stroke="#000" stroke-width="1.500"/><path d="M12 2h3v5h2l-3 3-3-3M7 18H5v-4H3l2-3 3 3" fill="none" stroke="#1f9c44" stroke-width="1.500"/></svg>反选</button>
    <button role="menuitem"><svg class="blue" viewBox="0 0 20 20"><use href="#glasses" x="1" y="1" width="17" height="11"/><text x="8" y="19">all</text></svg>显示所有</button>
    <button role="menuitem" class="hot"><svg viewBox="0 0 20 20"><use href="#cube" x="1" y="1" width="13" height="14"/><use href="#glasses" x="3" y="8" width="16" height="11" color="#667"/></svg>隐藏未选择</button>
    <hr>
    <button role="menuitem" disabled><svg viewBox="0 0 20 20"><use href="#cube" x="1" y="10" width="9" height="9"/><use href="#scissors" x="5" y="1" width="12" height="15"/></svg>切割零件</button>
    <button role="menuitem"><svg viewBox="0 0 20 20"><use href="#lines" x="3" y="1" width="10" height="12"/><use href="#lines" x="9" y="6" width="10" height="13"/><use href="#cube" x="1" y="10" width="8" height="9"/></svg>复制零件</button>
    <button role="menuitem" disabled><svg viewBox="0 0 20 20"><use href="#clip" x="2" y="1" width="11" height="14"/><use href="#lines" x="8" y="6" width="10" height="13"/></svg>粘贴零件</button>
    <hr>
    <button role="menuitem"><svg viewBox="0 0 20 20"><use href="#cube" x="1" y="1" width="9" height="9"/><use href="#gcube" x="9" y="1" width="10" height="9"/><path d="M2 11h8v7H2z" fill="#f8dc1c" stroke="#987c08"/><use href="#cube" x="10" y="10" width="9" height="9"/></svg>壳体转零件</button>
    <button role="menuitem" disabled><svg viewBox="0 0 20 20"><path d="M6 2q-3 0-2 4t-2 4q2 0 2 4t2 4" fill="none" stroke="#667"/><use href="#cube" x="5" y="5" width="9" height="10"/><use href="#cube" x="11" y="3" width="8" height="9"/></svg>合并选择零件</button>
    <hr>
    <button role="menuitem" class="sub"><svg viewBox="0 0 20 20"></svg>组成部件</button>
    <hr>
    <button role="menuitem"><svg viewBox="0 0 20 20"><path d="M2 6l6-2 3 2v9l-4 2-5-3z" fill="#d4377c"/><path d="M9 11l6-2 4 2v5l-6 2-4-2z" fill="#3bb8cc"/><path d="M2 6l5 2 4-2-3-2z" fill="#f39ac0"/><circle cx="9" cy="2" r="1.500" fill="#d4377c"/><circle cx="15" cy="5" r="1.500" fill="#3bb8cc"/></svg>自动上色</button>
    <hr>
    <button role="menuitem"><svg viewBox="0 0 20 20"><use href="#cube" x="1" y="1" width="13" height="14"/><use href="#redx" x="5" y="6" width="13" height="13"/></svg>卸载选择零件</button>
    <button role="menuitem"><svg viewBox="0 0 20 20"></svg>显示操作历史</button>
    <hr>
    <button role="menuitem" class="sub"><svg viewBox="0 0 20 20"></svg>列设置</button>
  </div>
  <div class="ime">
    <svg class="logo" viewBox="0 0 28 28"><use href="#s-logo"/></svg>
    <span>中</span>
    <svg viewBox="0 0 16 16"><path d="M12 2q2 9-10 9 9 7 13-2 0-4-3-7z" fill="#2673c4"/></svg>
    <svg viewBox="0 0 16 16"><circle cx="4" cy="4" r="1.800" fill="none" stroke="#2673c4" stroke-width="1.300"/><path d="M10 8h3q1 4-3 6 1-2 0-3z" fill="#2673c4"/></svg>
    <svg viewBox="0 0 16 16"><rect x="5.500" y="1" width="5" height="9" rx="2.500" fill="#2673c4"/><path d="M2.500 7q1 5 5.500 5t5.500-5M8 12v3" fill="none" stroke="#2673c4" stroke-width="1.800"/></svg>
    <svg viewBox="0 0 16 16"><path d="M.800 3h14.500v10.500H.800z" fill="#fff" stroke="#2673c4" stroke-width="1.500"/><path d="M2.500 6h11M2.500 8.500h11" stroke="#2673c4" stroke-width="1.500" stroke-dasharray="1.500 1"/><path d="M4 11.500h8" stroke="#2673c4" stroke-width="1.500"/></svg>
    <svg viewBox="0 0 16 16"><circle cx="7" cy="4" r="3" fill="#2673c4"/><path d="M1 14q0-7 6-6l5 0-3 3 1 3z" fill="#2673c4"/><circle cx="12" cy="12" r="3.300" fill="#2673c4" stroke="#fff"/></svg>
    <svg viewBox="0 0 16 16"><path d="M5 2q3 2 6 0l5 3-2 4-2-1v7H4V8L2 9 0 5z" fill="#2673c4"/></svg>
    <svg viewBox="0 0 16 16"><path d="M2 14l7-7" stroke="#2673c4" stroke-width="3"/><path d="M14 2l-3 3-1-1 2-3q-5 0-5 4t5 4q4-1 4-6z" fill="#2673c4"/></svg>
  </div>
</main>
<div class="status"></div>

<footer class="taskbar">
  <button class="start" aria-label="开始"><svg viewBox="0 0 16 16"><path d="M0 2.200l6.500-1v6.300H0zM7.300 1L16 0v7.500H7.300zM0 8.300h6.500v6.400l-6.500-1zM7.300 8.300H16V16l-8.700-1.200z" fill="#fff"/></svg></button>
  <label class="search"><svg viewBox="0 0 24 24"><circle cx="12" cy="12" r="9" fill="none" stroke="#fff" stroke-width="3"/></svg><input type="text" placeholder="有问题尽管问我"><svg class="mic" viewBox="0 0 16 18"><path d="M5.500 1.500h5v10h-5zM2.500 9v4h11V9M8 13v4M5 17h6" fill="none" stroke="#a8a8a8"/></svg></label>
  <div class="apps">
    <button class="run" aria-label="Edge"><svg viewBox="0 0 24 24"><path d="M2 11C4 3 9 1 13 1c6 0 9 5 9 9v4H9c0 6 8 6 12 3v4C14 25 5 23 4 15c0-4 3-7 6-8-2 1-2 3-2 4h8c0-7-9-7-14 0z" fill="#0a7cd8"/></svg></button>
    <button class="run multi" aria-label="文件"><svg viewBox="0 0 24 24"><path d="M1 3h8l2 2h12v17H1z" fill="#f8d775"/><path d="M1 7h22v14H1z" fill="#fde9a4"/><path d="M5 12h15v10h-4v-5H9v5H5z" fill="#38b4e8"/></svg></button>
    <button aria-label="QQ"><svg viewBox="0 0 24 24"><path d="M12 1c5 0 6 4 6 8l3 7-2 1-2-2v6H7v-6l-2 2-2-1 3-7c0-4 1-8 6-8z" fill="#050505"/><ellipse cx="12" cy="16" rx="5" ry="6" fill="#fff"/><path d="M6 10q6 4 12 0v3q-6 3-12 0z" fill="#e8232a"/><circle cx="10" cy="5.500" r="1.500" fill="#fff"/><circle cx="14" cy="5.500" r="1.500" fill="#fff"/><path d="M9 9h6l-3 2zM5 21h6v2H5zM13 21h6v2h-6z" fill="#f8a81c"/></svg></button>
    <button aria-label="微信"><svg viewBox="0 0 24 24"><path d="M9 2c5 0 8 3 8 7s-3 7-8 7l-4 2v-3C-2 11 0 2 9 2z" fill="#7ecb45"/><path d="M17 8c4 0 7 3 7 6s-1 4-3 5v2l-3-1c-5 1-8-2-8-6s3-6 7-6z" fill="#f2f2f2"/><path d="M5 7h1M11 7h1M14 13h1M19 13h1" stroke="#333" stroke-width="2"/></svg></button>
    <button aria-label="浏览器"><svg viewBox="0 0 24 24"><path d="M13 1q6-1 10 2l-2 6q-8-4-11 1-2 8 6 7 3 0 5-2l0 6Q11 25 6 19 0 6 13 1z" fill="#2aa5ea"/><path d="M10 2Q1 8 6 19l4 4Q-1 20 1 10q2-6 9-8z" fill="#0b5ea8"/></svg></button>
    <button class="run multi" aria-label="相册"><svg viewBox="0 0 24 24"><rect width="24" height="24" fill="#e8e4dc"/><circle cx="12" cy="12" r="12" fill="#5f5128"/><path d="M5 12l6-3 7 5-3 9H7z" fill="#dcae18"/><circle cx="13" cy="5" r="4" fill="#efe7d8"/><path d="M3 21l13-9" stroke="#f3d56c" stroke-width="2"/></svg></button>
    <button class="run" aria-label="WPS"><svg viewBox="0 0 24 24"><rect width="24" height="24" rx="4" fill="#3a97f6"/><path d="M5 8l2 8h2l3-6 3 6h2l2-8" fill="none" stroke="#fff" stroke-width="1.800"/></svg></button>
    <button class="run" aria-label="电脑管家"><svg class="white" viewBox="0 0 24 24"><rect width="24" height="24" rx="2" fill="#1769f5"/><use href="#shield" x="2" y="2" width="20" height="21"/></svg></button>
    <button class="run active" aria-label="Magics"><svg viewBox="0 0 24 24"><path d="M4 14L8 1l13 5-2 11-3 6z" fill="#e32417"/><path d="M8 1l-2 3 12 5-2 14M18 9l3-3" fill="none" stroke="#8c0e08"/><path d="M9 15l5-4 1 6z" fill="#2a2020"/></svg></button>
  </div>
  <div class="tray">
    <svg class="t12" viewBox="0 0 12 12"><path d="M1 9l5-5 5 5" fill="none" stroke="#fff" stroke-width="1.300"/></svg>
    <svg viewBox="0 0 18 18"><path d="M9 1q4 2 7 2v5q0 6-7 9Q2 14 2 8V3q3 0 7-2z" fill="#2f79e6" stroke="#e7f0ff" stroke-width="1.500"/><path d="M5 7l4 4 4-4" fill="none" stroke="#fff" stroke-width="2"/></svg>
    <svg viewBox="0 0 18 18"><path d="M2 15Q3 4 16 3M5 15q1-8 11-9M8 15q1-5 8-6M11 15q1-3 5-3" fill="none" stroke="#ddd" stroke-width="1.200"/><circle cx="15" cy="15" r="1.500" fill="#fff"/></svg>
    <span class="lang">中</span>
    <svg class="sg" viewBox="0 0 28 28"><use href="#s-logo"/></svg>
    <time>0:10<br>2017/1/10</time>
    <svg class="note" viewBox="0 0 18 18"><path d="M1.500 2.500h15v11h-5l-2.500 3v-3H1.500z" fill="none" stroke="#fff"/></svg>
  </div>
</footer>

<svg class="marks" aria-hidden="true">
  <defs><pattern id="wm" width="221" height="181" patternUnits="userSpaceOnUse">
    <g fill="#9a9aa4" fill-opacity=".07" stroke="#70707c" stroke-opacity=".12" stroke-width="1">
      <text class="w3d" transform="translate(72 165) rotate(-30)">3D</text>
      <text class="wcn" transform="translate(114 127) rotate(-32)">打印资源库</text>
      <text class="wurl" transform="translate(117 136) rotate(-29)">www.3dzyk.cn</text>
    </g>
  </pattern></defs>
  <rect width="100%" height="100%" fill="url(#wm)"/>
</svg>
<script src="mesh.js"></script>
</body>
</html>
```

FILE: styles.css
```css
* { box-sizing: border-box; }
html, body { height: 100%; }
body {
  margin: 0; display: flex; flex-direction: column; overflow: hidden; position: relative;
  background: #fff; color: #000;
  font: 12px/16px "Noto Sans", "Noto Sans CJK SC", sans-serif;
}
button { font: inherit; color: inherit; border: 0; background: none; padding: 0; margin: 0; }
svg { display: block; }
.defs { position: absolute; width: 0; height: 0; }

/* title and menu */
.titlebar { display: flex; align-items: center; height: 24px; padding-left: 3px; flex: none; }
.app-icon { width: 15px; height: 16px; }
.title { margin-left: 4px; flex: 1; font-size: 13px; }
.win-btns { display: flex; height: 22px; }
.win-btns button { width: 46px; display: grid; place-items: center; }
.win-btns svg { width: 12px; height: 12px; }
.menubar { display: flex; height: 19px; gap: 14px; padding-left: 7px; flex: none; }
.menubar button { line-height: 18px; }

/* toolbars */
.toolbars { flex: none; background: #f0f0f0; border-top: 1px solid #a0a0a0; padding-top: 2px; border-bottom: 2px solid #8a8a8a; }
.tool-row { display: flex; height: 33px; border-top: 1px solid #707070; border-left: 2px solid #808080; }
.tools { display: flex; align-items: center; background: #f0f0f0; }
.first .tools { border-right: 1px solid #707070; }
.tb { width: 30px; height: 30px; display: grid; place-items: center; flex: none; }
.tb svg { width: 28px; height: 28px; }
.tb.pressed { border: 1px solid #a0a0a0; background: #f6f6f6; }
.dim { opacity: .4; }
.sep { width: 8px; height: 31px; flex: none; background: linear-gradient(90deg, transparent 3px, #a0a0a0 3px, #a0a0a0 4px, #fff 4px, #fff 5px, transparent 5px); }
.drop { width: 12px; height: 30px; display: grid; place-items: center; }
.drop::before { content: ""; border: 4px solid transparent; border-top-color: #000; border-bottom: 0; }
.page-tabs { flex: 1; display: flex; align-items: flex-end; gap: 2px; padding-left: 2px; background: linear-gradient(#d2d2d2, #f2f2f2 70%); }
.page-tabs button { height: 16px; padding: 0 2px; line-height: 15px; border: 1px solid #606060; border-bottom: 0; border-radius: 5px 5px 0 0; background: linear-gradient(#ddd, #b4b4b4); white-space: nowrap; }
.page-tabs .on { background: #fff; }
.mono { font-family: "Liberation Mono", monospace; font-size: 10px; }

/* workspace */
.workspace { flex: 1; min-height: 0; display: flex; position: relative; }
.view { flex: 1; min-width: 0; display: flex; flex-direction: column; background: #c8c8ff; box-shadow: inset 1px 0 #777; }
.scene { flex: 1; min-height: 0; width: 100%; }
.ruler { flex: none; width: 100%; height: 36px; background: linear-gradient(#ececff, #c8c8ff); font: 12px "Noto Sans", sans-serif; }
.unit { font-size: 13px; }
.axis { font: 13px "Liberation Mono", monospace; }
.axis.bold { font-weight: bold; }

.dock { width: 352px; flex: none; display: flex; background: #f0f0f0; }
.dock-grip { width: 14px; background: #fff; padding: 3px 2px; }
.dock-grip svg { width: 11px; height: 34px; }
.panels { flex: 1; min-width: 0; display: flex; flex-direction: column; gap: 4px; padding: 4px 0 1px; }
.panel h2 { margin: 0 0 0 2px; height: 17px; padding: 0 7px 0 5px; display: flex; align-items: center; justify-content: space-between; font-size: 13px; line-height: 17px; color: #fff; background: linear-gradient(90deg, #98b2d4, #a6caf2); }
.ctl { display: flex; align-items: center; gap: 6px; }
.ctl svg { width: 9px; height: 9px; }
.ctl i { width: 8px; height: 8px; display: block; }
.max { border: 1px solid #fff; border-top-width: 2px; }
.min { border-top: 1px solid #fff; }
.x { background: linear-gradient(45deg, transparent 42%, #fff 42%, #fff 58%, transparent 58%), linear-gradient(-45deg, transparent 42%, #fff 42%, #fff 58%, transparent 58%); }
.body { border-left: 1px solid #707070; border-bottom: 1px solid #707070; padding: 4px 2px 0 4px; min-height: 24px; }
.tabs { display: flex; height: 19px; align-items: flex-end; }
.tabs button { height: 17px; line-height: 17px; padding: 0 4px; margin-right: 1px; border: 1px solid #999; border-bottom: 0; border-radius: 4px 4px 0 0; background: linear-gradient(#e2e2e2, #bdbdbd); color: #444; white-space: nowrap; overflow: hidden; }
.wide button { margin-right: 2px; }
.tabs .sm { font-size: 11px; }
.tabs .on { height: 19px; line-height: 20px; padding: 0 7px; margin-right: 0; background: #fff; color: #000; }
.page { border: 1px solid #8a8a8a; border-top: 0; border-radius: 0 0 6px 6px; background: linear-gradient(#fff, #f0f0f0 90%); padding: 4px 4px 3px; margin: 0 0 2px; }
.count { margin: 0; height: 22px; line-height: 18px; text-align: right; padding-right: 1px; }
.count span { margin-left: 4px; color: #223; }
.grid { border: 1px solid #777; background: #fff; }
table { width: 100%; border-collapse: collapse; table-layout: fixed; }
.c25 { width: 25px; } .c35 { width: 35px; } .c30 { width: 30px; } .c70 { width: 70px; }
th { height: 24px; padding: 0 0 0 5px; font-weight: normal; text-align: left; overflow: hidden; white-space: nowrap; border-right: 1px solid #ddd; }
th:last-child { border: 0; }
.sort { background: linear-gradient(#777, #777) 32px 3px / 6px 1px no-repeat; }
td { height: 14px; line-height: 14px; padding: 0 0 0 4px; overflow: hidden; white-space: nowrap; font-size: 11px; }
td:nth-child(7), td:nth-child(8) { padding-left: 3px; }
.alt { background: #f0f0f0; }
td input { appearance: none; display: block; width: 11px; height: 11px; margin: 0 0 0 1px; border: 1px solid #000; background: #fff; }
td input:checked::before { content: ""; display: block; width: 7px; height: 4px; margin: 1px; border-left: 2px solid #000; border-bottom: 2px solid #000; rotate: -45deg; }
.g { color: #8a8a8a; padding-left: 2px; } .g.b { color: #236aa8; }
.g svg { width: 17px; height: 12px; }
.sh { width: 24px; height: 14px; }
.cb { width: 14px; height: 14px; margin-left: 4px; }
.dot { display: block; width: 11px; height: 11px; border-radius: 50%; background: #888; border: 1px solid #111; margin-left: 2px; }
.hscroll { display: flex; justify-content: flex-start; height: 16px; margin-top: 9px; background: #f2f2f2; }
.hscroll button { width: 18px; display: grid; place-items: center; }
.hscroll button:last-child { margin-left: auto; }
.hscroll svg { width: 8px; height: 10px; }
.hscroll span { width: 270px; background: #cdcdcd; }
.part-tools { display: flex; gap: 6px; padding: 4px 50px 2px 1px; }
.part-tools svg { width: 26px; height: 26px; font-size: 11px; }
.part-tools .grow { flex: 1; }
.last { flex: 1; min-height: 0; display: flex; flex-direction: column; }
.last .body { flex: 1; display: flex; flex-direction: column; }
.last .tabs button { padding: 0 4px; margin-right: 1px; }
.last .tabs button:first-child { padding: 0 6px; }
.repair { flex: 1; padding: 10px 6px 3px 5px; background: linear-gradient(#fff, #f0f0f0 40%); }
.btn { height: 19px; border: 1px solid #adadad; background: #e1e1e1; line-height: 16px; white-space: nowrap; overflow: hidden; min-width: 0; }
.btn.focus { width: 110px; border: 2px solid #0078d7; line-height: 14px; display: block; }
fieldset { border: 1px solid #dcdcdc; margin: 4px 0 0; padding: 3px 9px 4px 6px; min-width: 0; }
legend { padding: 0 2px; line-height: 16px; }
.btns { display: grid; grid-template-columns: repeat(3, 1fr); gap: 5px 6px; }
.btn.tall { height: 40px; margin-bottom: 20px; }
.clip span { display: block; margin: 0 -8px; }
.lbl { text-align: right; padding-top: 2px; margin-right: -14px; }
.color { height: 19px; margin-left: 12px; padding: 3px; border: 1px solid #999; background: #fff; }
.color i { display: block; height: 11px; border: 1px solid #000; background: #ff8000; }

/* floating pieces */
.context { position: absolute; right: 138px; top: 187px; width: 140px; padding: 2px; border: 1px solid #999; background: linear-gradient(90deg, #f1f1f1 24px, #fbfbfb 24px); box-shadow: 3px 3px 3px #0008; }
.context button { display: flex; align-items: center; gap: 7px; width: 100%; height: 20px; padding-left: 2px; text-align: left; border: 1px solid transparent; white-space: nowrap; position: relative; }
.context svg { width: 19px; height: 19px; flex: none; font-size: 9px; }
.context .blue { color: #236aa8; }
.context button:disabled { color: #777; }
.context button:disabled svg { opacity: .5; }
.context .hot { font-weight: bold; background: #91c3ee; border-color: #0078d7; }
.context hr { border: 0; height: 1px; margin: 4px 0 5px; background: #e4e4e4; }
.sub::after { content: ""; margin-left: auto; margin-right: 4px; border: 4px solid transparent; border-left: 5px solid #000; border-right: 0; }
.net { position: absolute; right: 40px; top: 420px; display: flex; align-items: center; }
.rates { width: 74px; height: 44px; margin-right: -32px; padding: 2px 0 0 16px; background: #2e303c; color: #a9abb5; display: flex; flex-direction: column; font-size: 10px; line-height: 20px; }
.rates b { font-size: 11px; color: #fff; font-weight: normal; }
.gauge { position: relative; width: 60px; height: 60px; }
.gauge p { position: absolute; inset: 0; margin: 0; text-align: center; font: 300 24px/58px "Open Sans", "Noto Sans", sans-serif; color: #eee; }
.gauge small { font-size: 11px; }
.cloud { position: absolute; right: 0; top: 388px; width: 65px; height: 26px; display: flex; overflow: hidden; border: 1px solid #4aa4e0; border-radius: 2px 0 0 2px; background: linear-gradient(#dff1fc, #b4ddf6); }
.mark { flex: none; width: 29px; background: #2d98e4; display: grid; place-items: center; }
.mark svg { width: 22px; height: 22px; }
.txt { padding-left: 12px; white-space: nowrap; line-height: 25px; color: #4c6f8c; }
.ime { position: absolute; right: 44px; top: 585px; height: 24px; display: flex; align-items: center; gap: 6px; padding: 0 3px 0 25px; border: 1px solid #b8cbe0; background: #fff; color: #2673c4; z-index: 3; }
.ime svg { width: 16px; height: 16px; }
.ime .logo { position: absolute; left: -8px; top: -4px; width: 28px; height: 28px; }
.ime span { font-weight: bold; font-size: 15px; }
.status { flex: none; height: 20px; background: #f0f0f0; border-top: 1px solid #bbb; }

/* taskbar */
.taskbar { flex: none; height: 40px; display: flex; background: #14201f; color: #fff; }
.start { width: 48px; display: grid; place-items: center; background: #07100f; }
.start svg { width: 16px; height: 16px; }
.search { width: 344px; background: #333; display: flex; align-items: center; padding: 0 12px 0 8px; }
.search svg { width: 24px; height: 24px; }
.search input { flex: 1; min-width: 0; border: 0; background: none; font: 14px "Noto Sans CJK SC", sans-serif; padding: 0 4px; color: #fff; outline: 0; }
.search input::placeholder { color: #989898; }
.search .mic { width: 16px; height: 18px; }
.apps { display: flex; gap: 1px; padding-left: 3px; }
.apps button { width: 48px; display: grid; place-items: center; position: relative; }
.apps svg { width: 24px; height: 24px; }
.white { color: #fff; }
.run::after { content: ""; position: absolute; left: 4px; right: 4px; bottom: 0; height: 2px; background: #7adfe8; }
.multi::after { background: linear-gradient(90deg, #7adfe8 31px, #4f939b 31px); }
.apps .active { background: #49514f; }
.apps .active::after { left: 0; right: 0; }
.tray { margin-left: auto; display: flex; align-items: center; padding-right: 24px; gap: 8px; }
.tray svg { width: 17px; height: 17px; }
.tray .t12 { width: 14px; height: 14px; }
.lang { font-size: 13px; }
.tray .sg { margin-left: 4px; }
time { width: 74px; margin-left: 2px; text-align: center; font-size: 12px; line-height: 19px; margin-right: 4px; }

.marks { position: absolute; inset: 0; width: 100%; height: 100%; pointer-events: none; z-index: 5; }
.w3d { font: italic bold 44px "Liberation Sans", sans-serif; }
.wcn { font: bold 19px "Noto Sans CJK SC", sans-serif; }
.wurl { font: 14px "Liberation Sans", sans-serif; stroke: none; fill-opacity: .25; }
```

FILE: mesh.js
```javascript
// Faceted vase surface: outline [y, left, right] and brightness samples across each level.
(() => {
  const outline = [
    [213, 500, 532], [220, 479, 541], [228, 477, 549], [236, 474, 552], [253, 470, 556], [260, 468, 557],
    [290, 459, 565], [320, 454, 574], [365, 444, 588], [390, 439, 594], [420, 434, 600], [450, 430, 604],
    [475, 431, 606], [520, 432, 604], [560, 434, 604], [588, 437, 603], [595, 444, 594], [601, 458, 580]
  ];
  const tone = [
    [213, 45, 50, 55, 55, 50, 50, 50, 48, 50, 50, 45],
    [228, 60, 78, 85, 80, 78, 70, 70, 68, 65, 72, 50],
    [245, 70, 98, 105, 112, 120, 122, 112, 110, 80, 80, 60],
    [260, 70, 88, 100, 125, 132, 128, 125, 112, 90, 75, 66],
    [290, 55, 62, 100, 105, 136, 128, 130, 150, 95, 85, 62],
    [310, 50, 60, 95, 108, 142, 142, 165, 140, 92, 80, 52],
    [340, 52, 85, 95, 100, 150, 170, 122, 105, 100, 88, 48],
    [370, 60, 90, 95, 108, 130, 172, 115, 104, 102, 96, 40],
    [395, 60, 90, 95, 105, 125, 165, 116, 102, 102, 78, 35],
    [420, 48, 88, 95, 108, 132, 138, 118, 106, 92, 62, 38],
    [460, 45, 76, 90, 112, 118, 126, 122, 98, 72, 58, 44],
    [500, 45, 78, 100, 118, 122, 126, 106, 88, 70, 64, 48],
    [530, 52, 76, 84, 104, 122, 106, 92, 90, 82, 62, 40],
    [560, 62, 82, 84, 84, 96, 96, 106, 108, 104, 88, 42],
    [590, 36, 56, 74, 84, 90, 92, 94, 92, 80, 48, 46],
    [602, 34, 40, 50, 60, 62, 62, 60, 58, 50, 42, 40]
  ];
  const at = (table, y) => {
    let i = 0;
    while (i < table.length - 2 && table[i + 1][0] < y) i++;
    const a = table[i], b = table[i + 1];
    const t = Math.max(0, Math.min(1, (y - a[0]) / (b[0] - a[0])));
    return a.slice(1).map((v, k) => v + (b[k + 1] - v) * t);
  };
  let seed = 7;
  const rnd = () => (seed = (seed * 16807) % 2147483647) / 2147483647;
  const shade = (u, y) => {
    const row = at(tone, y), p = Math.max(0, Math.min(9.99, u * 10)), i = Math.floor(p);
    return row[i] + (row[i + 1] - row[i]) * (p - i);
  };
  const cols = 18, rows = 40, y0 = 213, y1 = 601, pts = [];
  for (let r = 0; r <= rows; r++) {
    const y = y0 + (y1 - y0) * r / rows, [l, g] = at(outline, y);
    const line = [];
    for (let c = 0; c <= cols; c++) {
      const inner = c > 0 && c < cols && r > 0 && r < rows;
      line.push([l + (g - l) * c / cols + (inner ? rnd() * 3 - 1.5 : 0), y + (inner ? rnd() * 5 - 2.5 : 0)]);
    }
    pts.push(line);
  }
  let out = "";
  const tri = (a, b, c, u, y) => {
    const v = Math.round(shade(u, y) + rnd() * 8 - 4);
    const f = `rgb(${v},${v},${v})`;
    out += `<polygon points="${[a, b, c].map(p => p[0].toFixed(1) + "," + p[1].toFixed(1)).join(" ")}" fill="${f}" stroke="${f}" stroke-width=".6"/>`;
  };
  for (let r = 0; r < rows; r++) for (let c = 0; c < cols; c++) {
    const a = pts[r][c], b = pts[r][c + 1], d = pts[r + 1][c], e = pts[r + 1][c + 1];
    const y = (a[1] + e[1]) / 2, u = c / cols;
    tri(a, b, d, u + .02, y);
    tri(b, e, d, u + .04, y);
  }
  document.getElementById("mesh").innerHTML = out;
})();
```
